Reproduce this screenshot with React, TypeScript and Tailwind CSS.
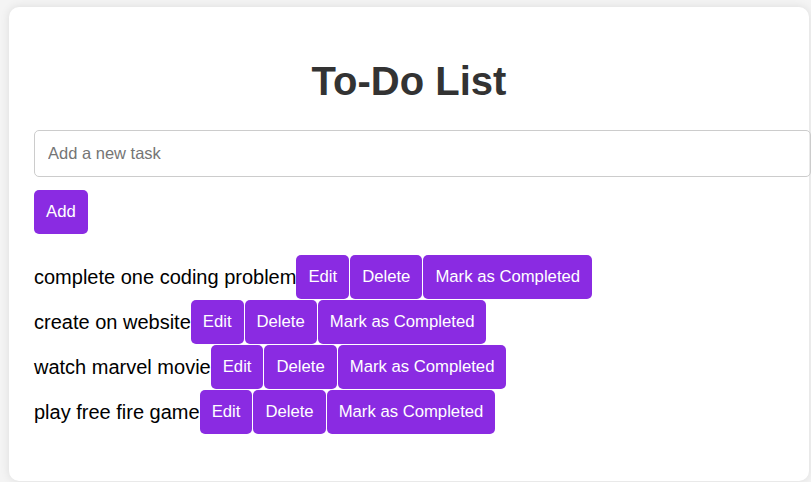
import { useState } from "react";

type Task = { id: number; text: string };

const initialTasks: Task[] = [
    { id: 1, text: "complete one coding problem" },
    { id: 2, text: "create on website" },
    { id: 3, text: "watch marvel movie" },
    { id: 4, text: "play free fire game" },
];

const btn =
    "h-[44px] rounded-[5px] bg-[#8a2be2] px-[12px] text-[16.7px] leading-[20px] text-white";

export default function App() {
    const [tasks] = useState<Task[]>(initialTasks);
    const [value, setValue] = useState("");

    return (
        <div className="min-h-[482px] bg-[#f4f4f4] pt-[7px] pl-[9px] font-['Liberation_Sans',Arial,sans-serif]">
            <div className="w-[800px] rounded-[10px] bg-white px-[25px] pt-[25px] pb-[25px] shadow-[0_0_10px_rgba(0,0,0,0.1)]">
                <h1 className="mt-[26px] mb-[26px] text-center text-[40px] leading-[46px] font-bold text-[#333]">
                    To-Do List
                </h1>
                <input
                    className="h-[47px] w-[777px] rounded-[5px] border border-[#ccc] px-[13px] text-[16.5px] outline-none placeholder:text-[#757575]"
                    placeholder="Add a new task"
                    value={value}
                    onChange={e => setValue(e.target.value)}
                />
                <button className={`${btn} mt-[13px] block`}>Add</button>
                <ul className="mt-[21px] mb-[21px]">
                    {tasks.map(task => (
                        <li key={task.id} className="flex h-[45px] items-start">
                            <span className="mt-[11px] text-[20px] leading-[23px] text-black">
                                {task.text}
                            </span>
                            <button className={btn}>Edit</button>
                            <button className={`${btn} ml-px`}>Delete</button>
                            <button className={`${btn} ml-px`}>Mark as Completed</button>
                        </li>
                    ))}
                </ul>
            </div>
        </div>
    );
}
